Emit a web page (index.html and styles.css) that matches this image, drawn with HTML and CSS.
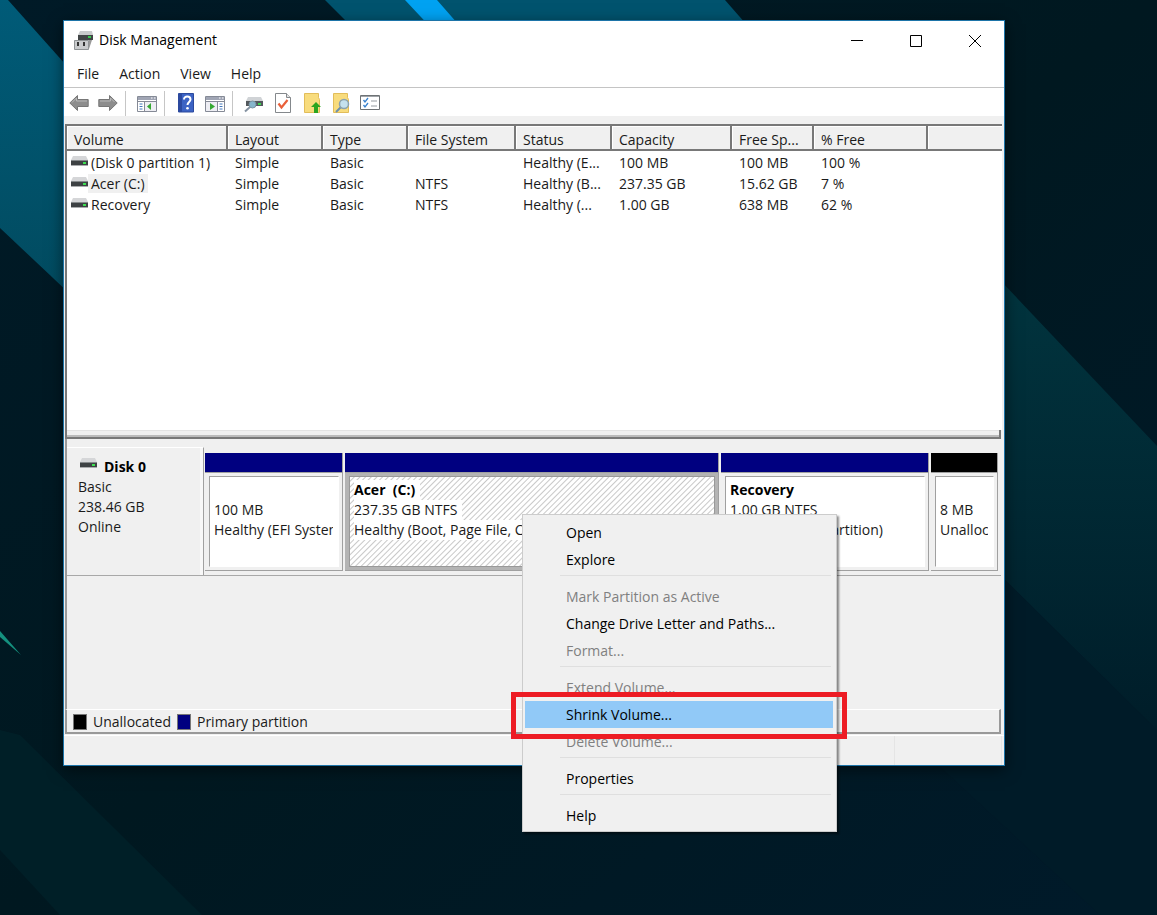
FILE: index.html
```html
<!DOCTYPE html>
<html lang="en">
<head>
  <meta charset="UTF-8">
  <meta name="viewport" content="width=device-width, initial-scale=1.0">
  <link rel="stylesheet" href="styles.css">
  <title>Disk Management</title>
</head>
<body>
  <svg class="wallpaper" viewBox="0 0 1157 915" preserveAspectRatio="none" aria-hidden="true">
    <defs>
      <linearGradient id="blueBand" x1="0" y1="0" x2="0" y2="1">
        <stop offset="0" stop-color="#005b78"/>
        <stop offset="1" stop-color="#02475a"/>
      </linearGradient>
      <linearGradient id="tealBand" x1="0" y1="0" x2="0" y2="1">
        <stop offset="0" stop-color="#01343e"/>
        <stop offset="1" stop-color="#001d29"/>
      </linearGradient>
      <linearGradient id="base" x1="0" y1="0" x2="1" y2="1">
        <stop offset="0" stop-color="#001a27"/>
        <stop offset="0.5" stop-color="#001820"/>
        <stop offset="1" stop-color="#001a2a"/>
      </linearGradient>
    </defs>
    <rect width="1157" height="915" fill="url(#base)"/>
    <path d="M0 0H8L140 148V360L0 228z" fill="url(#blueBand)"/>
    <path d="M325 0H725L760 40H365z" fill="#01536e"/>
    <path d="M405 0H437L465 32H435z" fill="#00a2f2"/>
    <path d="M1000 280L1157 446V730L1000 575z" fill="url(#tealBand)"/>
    <path d="M1000 575L1157 730V915H1100L760 600z" fill="#001b28"/>
    <path d="M0 730L20 735L202 915H60L0 850z" fill="#001f27"/>
    <path d="M0 631L21 655L0 637z" fill="#14917f"/>
  </svg>

  <!-- small drive used in the list and the disk label -->
  <svg class="sprite" aria-hidden="true">
    <symbol id="drive" viewBox="0 0 17 10">
      <path d="M2 0h13l2 4H0z" fill="#d5d6d8"/>
      <path d="M0 4h17v5H0z" fill="#3d4143"/>
      <path d="M0 4h17v1H0z" fill="#85898b"/>
      <path d="M0 9h17v1H0z" fill="#a9abad"/>
      <path d="M12 6h3v2h-3z" fill="#3ee052"/>
    </symbol>
  </svg>

  <main class="window">
    <header class="titlebar">
      <svg class="app-icon" viewBox="0 0 20 19" aria-hidden="true">
        <path d="M6 0h12l1 4H4z" fill="#c9cbcc"/>
        <path d="M4 4h15v5H4z" fill="#414546"/>
        <path d="M14 5h3v2h-3z" fill="#35c94c"/>
        <path d="M15 9h3l-3 9z" fill="#999"/>
        <path d="M.5 9.500h14v9H.5z" fill="#c9cbcd" stroke="#8f9395"/>
        <path d="M3 11h2v4H3zM9 11h2v4H9z" fill="#333"/>
      </svg>
      <h1>Disk Management</h1>
      <div class="window-buttons">
        <button aria-label="Minimize"><svg viewBox="0 0 12 12"><path d="M0 5.5h12"/></svg></button>
        <button aria-label="Maximize"><svg viewBox="0 0 12 12"><path d="M.5 .5h11v11H.5z"/></svg></button>
        <button aria-label="Close"><svg viewBox="0 0 12 12"><path d="M0 0l12 12M12 0L0 12"/></svg></button>
      </div>
    </header>

    <nav class="menubar">
      <button>File</button>
      <button>Action</button>
      <button>View</button>
      <button>Help</button>
    </nav>

    <div class="toolbar">
      <button aria-label="Back">
        <svg viewBox="0 0 20 20"><path d="M.8 10L8.500 2.500V6.500H19.200V13.500H8.500V17.500z" fill="#8d8d8d" stroke="#777"/><path d="M3 9.500L7.500 5v3H18" fill="none" stroke="#b9b9b9"/></svg>
      </button>
      <button aria-label="Forward">
        <svg viewBox="0 0 20 20"><path d="M19.200 10L11.500 2.500V6.500H.8V13.500H11.500V17.500z" fill="#8d8d8d" stroke="#777"/><path d="M2 8h10.500V5l4 4" fill="none" stroke="#b9b9b9"/></svg>
      </button>
      <span class="divider"></span>
      <button class="after-divider" aria-label="Show or hide console tree">
        <svg viewBox="0 0 20 20"><path d="M.5 3.500h19v15H.5z" fill="#fff" stroke="#858a96"/><path d="M1 4h18v3H1z" fill="#a0a5b4"/><path d="M14 5h1.500M17 5h1.500" stroke="#fff"/><path d="M1 8.500h18M7.500 9v9" stroke="#858a96"/><path d="M2.500 11h3M2.500 13.500h3M2.500 16h3" stroke="#4579bd"/><path d="M8 9h11v9H8z" fill="#eeeef4"/><path d="M14 10v7l-4-3.500z" fill="#35a832"/></svg>
      </button>
      <span class="divider"></span>
      <button class="after-divider" aria-label="Help">
        <svg viewBox="0 0 20 20"><path d="M2.500 .5h15v18.500h-15z" fill="#3c63c4" stroke="#2c4a9e"/><path d="M3 1h3v18H3z" fill="#2b49a0"/><path d="M8 6.500C8 2.500 14.500 2.800 14.500 6.500C14.500 9 11.500 9 11.500 12" fill="none" stroke="#fff" stroke-width="2"/><circle cx="11.500" cy="15.200" r="1.300" fill="#fff"/></svg>
      </button>
      <button aria-label="Show or hide action pane">
        <svg viewBox="0 0 20 20"><path d="M.5 3.500h19v15H.5z" fill="#fff" stroke="#858a96"/><path d="M1 4h18v3H1z" fill="#a0a5b4"/><path d="M14 5h1.500M17 5h1.500" stroke="#fff"/><path d="M1 9h11v9H1z" fill="#eeeef4"/><path d="M1 8.500h18M12.500 9v9" stroke="#858a96"/><path d="M14.500 11h3M14.500 13.500h3M14.500 16h3" stroke="#4579bd"/><path d="M5 10v7l5-3.500z" fill="#35a832"/></svg>
      </button>
      <span class="divider"></span>
      <button class="after-divider" aria-label="Rescan disks">
        <svg viewBox="0 0 20 20"><path d="M4 4h13l2 4H2z" fill="#d0d3d6"/><path d="M2 8h17v5H2z" fill="#53585c"/><path d="M14 10h3v2h-3z" fill="#3fd552"/><path d="M1 18.500l5-4.500" stroke="#8492a1" stroke-width="2"/><circle cx="8.500" cy="11.500" r="3.500" fill="#86b6cc" stroke="#7c93a2"/></svg>
      </button>
      <button aria-label="Properties">
        <svg viewBox="0 0 20 20"><path d="M2.500 .5H13.500l4 4V19.500h-15z" fill="#fff" stroke="#84888c"/><path d="M13.500 .5v4h4" fill="#e3e3e3" stroke="#84888c"/><path d="M5.500 10.500l3 4L14.500 7" fill="none" stroke="#e9603a" stroke-width="2.200"/></svg>
      </button>
      <button aria-label="Up one level">
        <svg viewBox="0 0 20 20"><path d="M2.500 .5h14v4l1 2v13h-15z" fill="#f8dc7d" stroke="#e2bd5a"/><path d="M14 9l5 5h-3v6h-4v-6H9z" fill="#2ba51f"/></svg>
      </button>
      <button aria-label="Explore volume">
        <svg viewBox="0 0 20 20"><path d="M2.500 .5h14v4l1 2v13h-15z" fill="#f8dc7d" stroke="#e2bd5a"/><path d="M5 19l5-5" stroke="#6b90ae" stroke-width="2"/><circle cx="13" cy="11" r="4.500" fill="#c5e1ee" stroke="#8ba2ae" stroke-width="1.500"/></svg>
      </button>
      <button aria-label="Task list">
        <svg viewBox="0 0 20 20"><path d="M.5 2.500h19v14H.5z" fill="#fff" stroke="#6e7275"/><path d="M1 3.500h18" stroke="#a0a4a8"/><path d="M3.500 7l1.500 2 3-4M3.500 12l1.500 2 3-4" fill="none" stroke="#3a83cf" stroke-width="1.300"/><path d="M11 8h6M11 13h6" stroke="#959ba0"/></svg>
      </button>
    </div>

    <section class="volumes">
      <table>
        <colgroup>
          <col class="c-volume"><col class="c-layout"><col class="c-type"><col class="c-fs"><col class="c-status"><col class="c-capacity"><col class="c-free"><col class="c-percent"><col>
        </colgroup>
        <thead>
          <tr><th>Volume</th><th>Layout</th><th>Type</th><th>File System</th><th>Status</th><th>Capacity</th><th>Free Sp...</th><th>% Free</th><th></th></tr>
        </thead>
        <tbody>
          <tr><td><svg class="drive"><use href="#drive"/></svg><span>(Disk 0 partition 1)</span></td><td>Simple</td><td>Basic</td><td></td><td>Healthy (E...</td><td>100 MB</td><td>100 MB</td><td>100 %</td><td></td></tr>
          <tr><td><svg class="drive"><use href="#drive"/></svg><span class="marked">Acer (C:)</span></td><td>Simple</td><td>Basic</td><td>NTFS</td><td>Healthy (B...</td><td>237.35 GB</td><td>15.62 GB</td><td>7 %</td><td></td></tr>
          <tr><td><svg class="drive"><use href="#drive"/></svg><span>Recovery</span></td><td>Simple</td><td>Basic</td><td>NTFS</td><td>Healthy (...</td><td>1.00 GB</td><td>638 MB</td><td>62 %</td><td></td></tr>
        </tbody>
      </table>
    </section>
    <div class="splitter"></div>

    <section class="disks">
      <div class="disk">
        <div class="disk-label">
          <h2><svg class="drive"><use href="#drive"/></svg>Disk 0</h2>
          <p>Basic</p>
          <p>238.46 GB</p>
          <p>Online</p>
        </div>
        <div class="partitions">
          <div class="partition">
            <div class="bar"></div>
            <div class="details"><div class="box"><p>&nbsp;</p><p>100 MB</p><p>Healthy (EFI System Partition)</p></div></div>
          </div>
          <div class="partition selected">
            <div class="bar"></div>
            <div class="details"><div class="box"><h3>Acer&nbsp; (C:)</h3><p>237.35 GB NTFS</p><p>Healthy (Boot, Page File, Crash Dump)</p></div></div>
          </div>
          <div class="partition">
            <div class="bar"></div>
            <div class="details"><div class="box"><h3>Recovery</h3><p>1.00 GB NTFS</p><p>Healthy (OEM Partition)</p></div></div>
          </div>
          <div class="partition unallocated">
            <div class="bar"></div>
            <div class="details"><div class="box"><p>&nbsp;</p><p>8 MB</p><p>Unallocated</p></div></div>
          </div>
        </div>
      </div>
    </section>

    <div class="legend">
      <span class="swatch black"></span><span>Unallocated</span>
      <span class="swatch navy"></span><span>Primary partition</span>
    </div>
    <footer class="statusbar"><span></span><span></span></footer>
  </main>

  <div class="context-menu" role="menu">
    <button role="menuitem">Open</button>
    <button role="menuitem">Explore</button>
    <hr>
    <button role="menuitem" disabled>Mark Partition as Active</button>
    <button role="menuitem">Change Drive Letter and Paths...</button>
    <button role="menuitem" disabled>Format...</button>
    <hr>
    <button role="menuitem" disabled>Extend Volume...</button>
    <button role="menuitem" class="active">Shrink Volume...<span class="callout"></span></button>
    <button role="menuitem" disabled>Delete Volume...</button>
    <hr>
    <button role="menuitem">Properties</button>
    <hr>
    <button role="menuitem">Help</button>
  </div>
</body>
</html>
```
FILE: styles.css
```css
* {
  box-sizing: border-box;
}
body {
  position: relative;
  display: flex;
  min-height: 100vh;
  margin: 0;
  padding: 20px 152px 149px 63px;
  background: #001824;
  color: #1a1a1a;
  font-family: "Open Sans", "Noto Sans", sans-serif;
  font-size: 14px;
  line-height: 20px;
}
h1, h2, h3, p {
  margin: 0;
  font-size: 14px;
}
button {
  border: 0;
  padding: 0;
  background: none;
  color: inherit;
  font: inherit;
}
.wallpaper {
  position: absolute;
  top: 0;
  left: 0;
  width: 100%;
  height: 100%;
}
.sprite {
  position: absolute;
  width: 0;
  height: 0;
}
.drive {
  width: 17px;
  height: 10px;
}

.window {
  position: relative;
  display: flex;
  flex: 1;
  flex-direction: column;
  min-width: 0;
  border: 1px solid #1d74a8;
  background: #f0f0f0;
  box-shadow: 0 4px 14px rgba(0, 0, 0, 0.5);
}

/* title, menus, toolbar */
.titlebar {
  display: flex;
  align-items: center;
  height: 38px;
  padding-left: 10px;
  background: #fff;
}
.titlebar h1 {
  flex: 1;
  margin-left: 5px;
  color: #000;
  font-weight: 400;
}
.app-icon {
  width: 20px;
  height: 19px;
}
.window-buttons {
  display: flex;
}
.window-buttons button {
  width: 59px;
  height: 38px;
}
.window-buttons svg {
  width: 12px;
  height: 12px;
  fill: none;
  stroke: #000;
  vertical-align: middle;
}
.menubar {
  display: flex;
  gap: 20px;
  height: 29px;
  padding: 2px 13px 0;
  border-bottom: 1px solid #c4c4c4;
  background: #fff;
}
.toolbar {
  display: flex;
  align-items: center;
  gap: 9px;
  height: 28px;
  padding: 2px 5px 0;
  background: #fff;
}
.toolbar button,
.toolbar svg {
  display: block;
  width: 20px;
  height: 20px;
}
.divider {
  width: 1px;
  height: 25px;
  margin-left: -2px;
  background: #c6c6c6;
}
.after-divider {
  margin-left: 2px;
}

/* volume list */
.volumes {
  flex: 1;
  margin: 8px 2px 0 1px;
  border-top: 2px solid #787878;
  border-left: 2px solid #787878;
  background: #fff;
}
.volumes table {
  width: 100%;
  border-collapse: separate;
  border-spacing: 0;
  table-layout: fixed;
}
.c-volume { width: 161px; }
.c-layout { width: 95px; }
.c-type { width: 85px; }
.c-fs { width: 108px; }
.c-status { width: 96px; }
.c-capacity { width: 120px; }
.c-free { width: 82px; }
.c-percent { width: 114px; }
.volumes th {
  height: 25px;
  padding: 3px 0 0 7px;
  border-right: 2px solid #787878;
  border-bottom: 2px solid #787878;
  background: #f0f0f0;
  box-shadow: inset 1px 1px #fff;
  font-weight: 400;
  line-height: 19px;
  text-align: left;
}
.volumes th:last-child {
  border-right: 0;
}
.volumes td {
  height: 21px;
  padding: 2px 0 0 7px;
  line-height: 19px;
  white-space: nowrap;
}
.volumes tbody td:first-child {
  padding-left: 4px;
}
.volumes td span {
  display: inline-block;
  padding: 0 3px;
}
.volumes .drive {
  margin-bottom: 2px;
}
.marked {
  background: #f0f0f0;
}
.splitter {
  height: 9px;
  margin: 0 3px 0 1px;
  border-right: 2px solid #787878;
  border-bottom: 2px solid #787878;
  border-left: 2px solid #787878;
  background: linear-gradient(#e3e3e3 1px, #f0f0f0 1px, #f0f0f0 5px, #bbb 5px);
}

/* graphical view */
.disks {
  height: 270px;
  margin: 0 3px 0 1px;
  padding-top: 8px;
  border-left: 2px solid #999;
}
.disk {
  display: flex;
  height: 129px;
  border-bottom: 1px solid #a8a8a8;
}
.disk-label {
  width: 137px;
  padding: 9px 11px;
  border-top: 1px solid #fff;
  border-right: 1px solid #a0a0a0;
  box-shadow: inset -3px 0 #f8f8f8;
}
.disk-label h2 {
  display: flex;
  gap: 7px;
  padding-left: 2px;
  color: #000;
}
.disk-label .drive {
  margin-top: 1px;
}
.partitions {
  display: grid;
  flex: 1;
  grid-template-columns: 138fr 374fr 208fr 67fr;
  gap: 2px;
  min-width: 0;
  padding: 6px 3px 4px 1px;
}
.partition {
  display: flex;
  flex-direction: column;
  min-width: 0;
  border-right: 1px solid #a0a0a0;
  border-bottom: 1px solid #a0a0a0;
}
.bar {
  height: 19px;
  background: #000080;
}
.details {
  flex: 1;
  min-height: 0;
  padding: 3px 3px 3px 4px;
  border-top: 1px solid #a0a0a0;
}
.box {
  height: 100%;
  overflow: hidden;
  padding: 3px 5px 0 4px;
  border: 1px solid #fff;
  border-top-color: #a0a0a0;
  border-left-color: #a0a0a0;
  background: #fff;
}
.box p,
.box h3 {
  overflow: hidden;
  white-space: nowrap;
}
.box h3 {
  color: #000;
}
.selected .details {
  background: #b4b4b4;
}
.selected .box {
  border-color: #999;
  background: repeating-linear-gradient(135deg, #fff 0, #fff 2px, #c8c8c8 3px, #fff 4px);
}
.selected .box p,
.selected .box h3 {
  width: fit-content;
  max-width: 100%;
  padding-right: 5px;
  background: #fff;
}
.unallocated .bar {
  background: #000;
}

.legend {
  display: flex;
  align-items: center;
  gap: 6px;
  height: 25px;
  margin: 0 3px 0 1px;
  padding: 2px 0 0 6px;
  border: 2px solid #999;
  border-top: 1px solid #fff;
}
.swatch {
  width: 14px;
  height: 16px;
  border: 1px solid #777;
}
.black {
  background: #000;
}
.navy {
  background: #000080;
}
.statusbar {
  display: flex;
  height: 30px;
  margin-top: 1px;
  padding-right: 2px;
  border-top: 1px solid #fff;
}
.statusbar span {
  width: 107px;
  border-right: 1px solid #e5e5e5;
}
.statusbar span:first-child {
  flex: 1;
}

/* menu over the selected partition */
.context-menu {
  position: absolute;
  top: 514px;
  left: 522px;
  width: 315px;
  padding: 4px 3px 2px 2px;
  border: 1px solid #ccc;
  background: #f0f0f0;
  box-shadow: 2px 2px 2px rgba(0, 0, 0, 0.45);
}
.context-menu button {
  display: block;
  width: 100%;
  height: 27px;
  padding-left: 41px;
  color: #000;
  text-align: left;
}
.context-menu button:disabled {
  color: #808080;
}
.context-menu hr {
  height: 1px;
  margin: 2px 2px 7px 35px;
  border: 0;
  background: #dfdfdf;
}
.context-menu .active {
  position: relative;
  background: #91c9f7;
}
.callout {
  position: absolute;
  inset: -9px -14px -11px;
  border: 5px solid #ed1c24;
}
```
